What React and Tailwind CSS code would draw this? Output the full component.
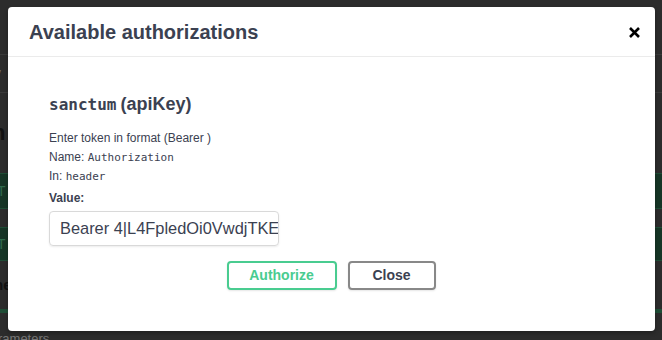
export default function App() {
  const sans = { fontFamily: '"Liberation Sans", Arial, sans-serif' };
  const mono = { fontFamily: '"DejaVu Sans Mono", monospace' };
  return (
    <div className="relative w-[662px] h-[340px] overflow-hidden bg-[#2c2c2c]" style={sans}>
      {/* dimmed page behind the modal */}
      <div className="flex flex-col w-full text-[#555]">
        <div className="h-[55px] border-b border-[#3a3a3a]" />
        <div className="h-[38px] border-b border-[#3a3a3a] flex items-center -ml-[6px] text-[14px] text-[#6b6b6b]">y</div>
        <div className="h-[78px] flex items-center -ml-[8px] text-[22px] font-bold text-[#111]">n</div>
        <div className="h-[36px] mt-[2px] border-y border-[#1f4d36] bg-[#163526] flex items-center -ml-[3px] text-[14px] text-[#2f6a4c]">T</div>
        <div className="h-[18px]" />
        <div className="h-[34px] border-y border-[#1f4d36] bg-[#163526] flex items-center -ml-[3px] text-[14px] text-[#2f6a4c]">T</div>
        <div className="h-[48px] flex items-center -ml-[6px] text-[15px] font-bold text-[#111]">ne</div>
        <div className="h-[4px] bg-[#1f4d36]" />
        <div className="h-[18px]" />
        <div className="-ml-[2px] text-[13px] text-[#777] leading-[16px]">rameters</div>
      </div>

      {/* modal */}
      <div className="absolute left-[8px] top-[7px] w-[647px] h-[324px] bg-white rounded-[4px] shadow-[0_2px_4px_rgba(0,0,0,0.3)] flex flex-col">
        <div className="h-[50px] border-b border-[#ebebeb] flex items-center justify-between pl-[21px] pr-[14px]">
          <h3 className="text-[20px] font-bold text-[#3b4151] leading-none">Available authorizations</h3>
          <svg width="13" height="13" viewBox="0 0 13 13" className="mt-[1px]">
            <path d="M2 2 L11 11 M11 2 L2 11" stroke="#000" strokeWidth="2.6" strokeLinecap="butt" />
          </svg>
        </div>
        <div className="flex flex-col pl-[41px] pt-[36px] text-[#3b4151]">
          <h4 className="text-[18px] font-bold leading-[22px] flex items-baseline">
            <code className="text-[16px]" style={mono}>sanctum</code>
            <span className="ml-[4px]">(apiKey)</span>
          </h4>
          <div className="mt-[13px] flex flex-col text-[12px] leading-[19px]">
            <p>Enter token in format (Bearer )</p>
            <p>
              Name: <code className="text-[11px]" style={mono}>Authorization</code>
            </p>
            <p>
              In: <code className="text-[11px]" style={mono}>header</code>
            </p>
          </div>
          <label className="mt-[4px] text-[12px] font-bold leading-[16px]">Value:</label>
          <div className="mt-[5px] w-[230px] h-[35px] border border-[#d9d9d9] rounded-[4px] overflow-hidden flex items-center pl-[10px] shadow-[0_1px_2px_rgba(0,0,0,0.08)]">
            <span className="text-[16.4px] whitespace-nowrap text-[#3b4151]">Bearer 4|L4FpledOi0VwdjTKE9sXk</span>
          </div>
        </div>
        <div className="flex justify-center gap-[11px] mt-[15px] pr-[1px]">
          <button className="w-[110px] h-[29px] border-2 border-[#49cc90] rounded-[4px] text-[14px] font-bold text-[#49cc90] shadow-[0_1px_2px_rgba(0,0,0,0.1)]">Authorize</button>
          <button className="w-[88px] h-[29px] border-2 border-[#888] rounded-[4px] text-[14px] font-bold text-[#3b4151] shadow-[0_1px_2px_rgba(0,0,0,0.1)]">Close</button>
        </div>
      </div>
    </div>
  );
}
